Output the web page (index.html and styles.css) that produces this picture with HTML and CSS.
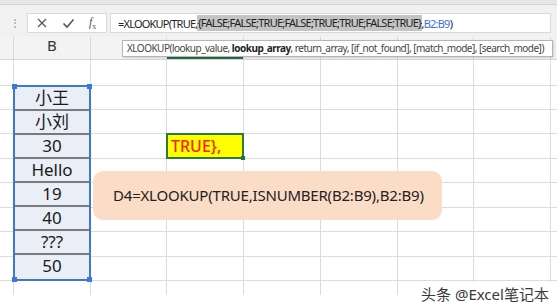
FILE: index.html
```html
<!DOCTYPE html>
<html lang="zh-CN">
<head>
    <meta charset="UTF-8">
    <title>XLOOKUP ISNUMBER</title>
    <link rel="stylesheet" href="styles.css">
</head>
<body>
    <!-- Ribbon edge -->
    <div class="ribbon-edge"></div>

    <!-- Formula bar -->
    <div class="formula-row">
        <div class="grip"><span></span></div>
        <div class="fx-buttons">
            <svg class="ico" width="12" height="12" viewBox="0 0 12 12"><path d="M2 2 L10 10 M10 2 L2 10" stroke="#555" stroke-width="1.2" fill="none"/></svg>
            <svg class="ico" width="13" height="12" viewBox="0 0 13 12"><path d="M1.5 6.5 L5 10 L11.5 2.5" stroke="#555" stroke-width="1.6" fill="none"/></svg>
            <span class="fx"><i>f</i><sub>x</sub></span>
        </div>
        <div class="formula-box">
            <span>=XLOOKUP(TRUE,</span><span class="sel">{FALSE;FALSE;TRUE;FALSE;TRUE;TRUE;FALSE;TRUE}</span><span>,</span><span class="ref">B2:B9</span><span>)</span>
        </div>
    </div>

    <!-- Column headers -->
    <div class="col-head">
        <div class="h"></div>
        <div class="h">B</div>
        <div class="h"></div>
        <div class="h active"></div>
        <div class="h"></div>
        <div class="h"></div>
        <div class="h"></div>
        <div class="h"></div>
        <div class="h"></div>
    </div>

    <div class="tooltip">XLOOKUP(lookup_value, <b>lookup_array</b>, return_array, [if_not_found], [match_mode], [search_mode])</div>

    <!-- Sheet body -->
    <div class="sheet">
        <div class="range">
            <div class="v">小王</div>
            <div class="v">小刘</div>
            <div class="v">30</div>
            <div class="v">Hello</div>
            <div class="v">19</div>
            <div class="v">40</div>
            <div class="v">???</div>
            <div class="v last">50</div>
            <span class="handle tl"></span>
            <span class="handle tr"></span>
            <span class="handle bl"></span>
            <span class="handle br"></span>
        </div>
        <div class="d4">TRUE},<span class="handle fill"></span></div>

        <div class="c"></div><div class="c"></div><div class="c"></div><div class="c"></div><div class="c"></div><div class="c"></div><div class="c"></div><div class="c"></div><div class="c"></div>
        <div class="c"></div><div class="c"></div><div class="c"></div><div class="c"></div><div class="c"></div><div class="c"></div><div class="c"></div><div class="c"></div>
        <div class="c"></div><div class="c"></div><div class="c"></div><div class="c"></div><div class="c"></div><div class="c"></div><div class="c"></div><div class="c"></div>
        <div class="c"></div><div class="c"></div><div class="c"></div><div class="c"></div><div class="c"></div><div class="c"></div><div class="c"></div>
        <div class="c"></div><div class="c"></div><div class="c"></div><div class="c"></div><div class="c"></div><div class="c"></div><div class="c"></div><div class="c"></div>
        <div class="c"></div><div class="c"></div><div class="c"></div><div class="c"></div><div class="c"></div><div class="c"></div><div class="c"></div><div class="c"></div>
        <div class="c"></div><div class="c"></div><div class="c"></div><div class="c"></div><div class="c"></div><div class="c"></div><div class="c"></div><div class="c"></div>
        <div class="c"></div><div class="c"></div><div class="c"></div><div class="c"></div><div class="c"></div><div class="c"></div><div class="c"></div><div class="c"></div>
        <div class="c"></div><div class="c"></div><div class="c"></div><div class="c"></div><div class="c"></div><div class="c"></div><div class="c"></div><div class="c"></div>
        <div class="c"></div><div class="c"></div><div class="c"></div><div class="c"></div><div class="c"></div><div class="c"></div><div class="c"></div><div class="c"></div><div class="c"></div>

        <div class="note">D4=XLOOKUP(TRUE,ISNUMBER(B2:B9),B2:B9)</div>
    </div>

    <div class="watermark">头条 @Excel笔记本</div>
</body>
</html>
```

FILE: styles.css
```css
/* Basic reset */
* {
    margin: 0;
    padding: 0;
    box-sizing: border-box;
}

body {
    width: 557px;
    height: 308px;
    overflow: hidden;
    position: relative;
    background: #fff;
    font-family: "Noto Sans", "Noto Sans CJK SC", sans-serif;
    color: #222;
}

/* Top strip */
.ribbon-edge {
    height: 13px;
    background: linear-gradient(#e6e6e6 0 4px, #d3d3d3 4px 5px, #f1f1f1 5px);
}

/* Formula bar */
.formula-row {
    display: flex;
    height: 24px;
    padding-bottom: 4px;
    background: #f1f1f1;
}

.grip {
    width: 27px;
    padding: 6px 0 0 14px;
}

.grip span {
    display: block;
    width: 2px;
    height: 9px;
    border-left: 2px dotted #bdbdbd;
}

.fx-buttons {
    width: 80px;
    display: flex;
    align-items: center;
    gap: 14px;
    padding-left: 8px;
    background: #fff;
    border: 1px solid #dadada;
}

.fx {
    font-family: "Liberation Serif", serif;
    font-size: 12px;
    color: #555;
}

.fx sub {
    font-size: 8px;
}

.formula-box {
    margin-left: 3px;
    width: 441px;
    display: flex;
    align-items: center;
    padding-left: 7px;
    background: #fff;
    border: 1px solid #dadada;
    font-size: 11px;
    letter-spacing: -0.78px;
    color: #222;
}

.formula-box .sel {
    background: #c4c4c4;
    line-height: 16px;
}

.formula-box .ref {
    color: #3b6fd6;
}

/* Column header row */
.col-head {
    display: grid;
    grid-template-columns: 13px 76px 75px 76px 76px 76px 75px 76px 6px;
    column-gap: 1px;
    height: 23px;
    background: #d9d9d9;
    border-bottom: 1px solid #d6d6d6;
}

.col-head .h {
    background: #f3f3f3;
    text-align: center;
    font-size: 15px;
    line-height: 16px;
    color: #333;
}

.col-head .active {
    border-bottom: 2px solid #217346;
}

.tooltip {
    position: absolute;
    left: 122px;
    top: 40px;
    width: 431px;
    height: 17px;
    padding-left: 4px;
    background: #fff;
    border: 1px solid #b5b5b5;
    box-shadow: 1px 1px 2px rgba(0, 0, 0, 0.15);
    font-size: 10px;
    line-height: 15px;
    letter-spacing: -0.52px;
    color: #444;
    white-space: nowrap;
}

.tooltip b {
    color: #222;
}

/* Sheet grid */
.sheet {
    position: relative;
    display: grid;
    grid-template-columns: 13px 76px 75px 76px 76px 76px 75px 76px 6px;
    grid-template-rows: 25px 23px 23px 24px 23px 24px 23px 24px 23px 14px;
    gap: 1px;
    background: #dcdcdc;
}

.c {
    background: #fff;
}

.range {
    grid-column: 2;
    grid-row: 2 / 10;
    margin: -1px;
    position: relative;
    border: 2px solid #3d78d6;
    background: #e9eef7;
}

.range .v {
    height: 24px;
    border-bottom: 2px solid #7a7a7a;
    text-align: center;
    font-size: 17px;
    line-height: 22px;
    color: #1a1a1a;
}

.range .last {
    border-bottom: none;
}

.handle {
    position: absolute;
    width: 5px;
    height: 5px;
    background: #3d78d6;
}

.tl { left: -3px; top: -3px; }
.tr { right: -3px; top: -3px; }
.bl { left: -3px; bottom: -3px; }
.br { right: -3px; bottom: -3px; }

.d4 {
    grid-column: 4;
    grid-row: 4;
    margin: -1px;
    position: relative;
    background: #ffff00;
    border: 2px solid #2b7a3e;
    padding-left: 3px;
    font-size: 16px;
    line-height: 22px;
    font-weight: 500;
    color: #ff1a1a;
}

.d4 .fill {
    right: -3px;
    bottom: -3px;
    width: 4px;
    height: 4px;
    background: #217346;
}

/* Annotation */
.note {
    position: absolute;
    left: 93px;
    top: 111px;
    width: 349px;
    height: 49px;
    padding-left: 20px;
    border-radius: 10px;
    background: #fbdcc7;
    font-size: 15px;
    line-height: 49px;
    letter-spacing: -0.2px;
    color: #222;
}

.watermark {
    position: absolute;
    left: 417px;
    top: 282px;
    padding: 2px 4px;
    background: #fff;
    font-size: 15px;
    line-height: 20px;
    color: #3a3a3a;
}
```
